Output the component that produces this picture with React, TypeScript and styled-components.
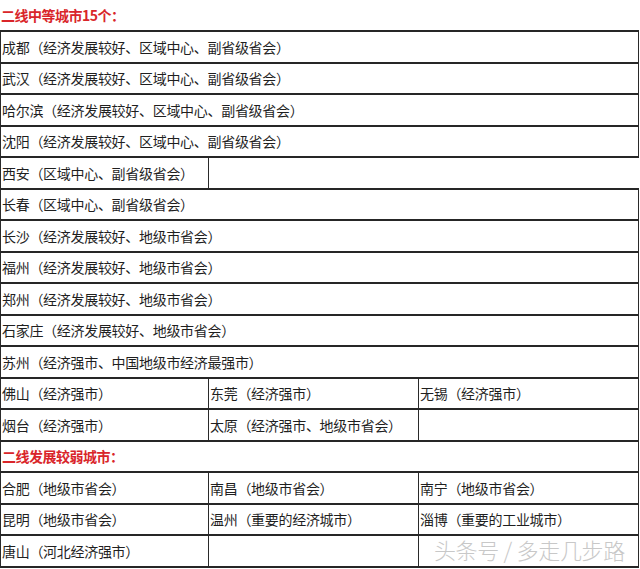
import React from "react";
import styled, { createGlobalStyle, css } from "styled-components";

const GlobalStyle = createGlobalStyle`
  html, body {
    margin: 0;
    padding: 0;
    background: #ffffff;
  }
  body {
    font-family: "Noto Sans CJK SC", "Noto Sans", sans-serif;
    color: #1f1f1f;
  }
`;

const Sheet = styled.div`
  position: relative;
  width: 639px;
  box-sizing: border-box;
`;

const Row = styled.div<{ $first?: boolean; $bare?: boolean; $openRight?: boolean }>`
  display: grid;
  grid-template-columns: 208px 210px 1fr;
  box-sizing: border-box;
  height: ${(p) => (p.$first ? "32px" : "31.5px")};
  border-bottom: 2px solid #262626;
  border-left: ${(p) => (p.$bare ? "none" : "1px solid #2a2a2a")};
  border-right: ${(p) => (p.$bare || p.$openRight ? "none" : "1px solid #2a2a2a")};
`;

const Cell = styled.div<{ $span?: number; $line?: boolean }>`
  grid-column: span ${(p) => p.$span ?? 1};
  display: flex;
  align-items: center;
  padding-left: 1px;
  box-sizing: border-box;
  font-size: 14px;
  letter-spacing: -0.3px;
  white-space: nowrap;
  ${(p) =>
    p.$line &&
    css`
      border-right: 1px solid #2a2a2a;
    `}
`;

const Title = styled(Cell)`
  color: #d9252a;
  font-weight: 700;
  letter-spacing: -0.5px;
`;

const Watermark = styled.div`
  position: absolute;
  right: 14px;
  bottom: 3px;
  font-size: 22px;
  letter-spacing: -0.3px;
  color: #c8c8c8;
  font-weight: 300;
  text-shadow: 0 0 1px #ffffff;
  pointer-events: none;
`;

const full = [
  "成都（经济发展较好、区域中心、副省级省会）",
  "武汉（经济发展较好、区域中心、副省级省会）",
  "哈尔滨（经济发展较好、区域中心、副省级省会）",
  "沈阳（经济发展较好、区域中心、副省级省会）",
];

const full2 = [
  "长春（区域中心、副省级省会）",
  "长沙（经济发展较好、地级市省会）",
  "福州（经济发展较好、地级市省会）",
  "郑州（经济发展较好、地级市省会）",
  "石家庄（经济发展较好、地级市省会）",
  "苏州（经济强市、中国地级市经济最强市）",
];

const trio1 = [
  ["佛山（经济强市）", "东莞（经济强市）", "无锡（经济强市）"],
  ["烟台（经济强市）", "太原（经济强市、地级市省会）", ""],
];

const trio2 = [
  ["合肥（地级市省会）", "南昌（地级市省会）", "南宁（地级市省会）"],
  ["昆明（地级市省会）", "温州（重要的经济城市）", "淄博（重要的工业城市）"],
  ["唐山（河北经济强市）", "", ""],
];

const TrioRow: React.FC<{ cells: string[] }> = ({ cells }) => (
  <Row>
    <Cell $line>{cells[0]}</Cell>
    <Cell $line>{cells[1]}</Cell>
    <Cell>{cells[2]}</Cell>
  </Row>
);

export default function App() {
  return (
    <>
      <GlobalStyle />
      <Sheet>
        <Row $first $bare>
          <Title $span={3}>二线中等城市15个：</Title>
        </Row>
        {full.map((t) => (
          <Row key={t}>
            <Cell $span={3}>{t}</Cell>
          </Row>
        ))}
        <Row $openRight>
          <Cell $line>西安（区域中心、副省级省会）</Cell>
        </Row>
        {full2.map((t) => (
          <Row key={t}>
            <Cell $span={3}>{t}</Cell>
          </Row>
        ))}
        {trio1.map((r) => (
          <TrioRow key={r[0]} cells={r} />
        ))}
        <Row>
          <Title $span={3}>二线发展较弱城市：</Title>
        </Row>
        {trio2.map((r) => (
          <TrioRow key={r[0]} cells={r} />
        ))}
        <Watermark>头条号 / 多走几步路</Watermark>
      </Sheet>
    </>
  );
}
